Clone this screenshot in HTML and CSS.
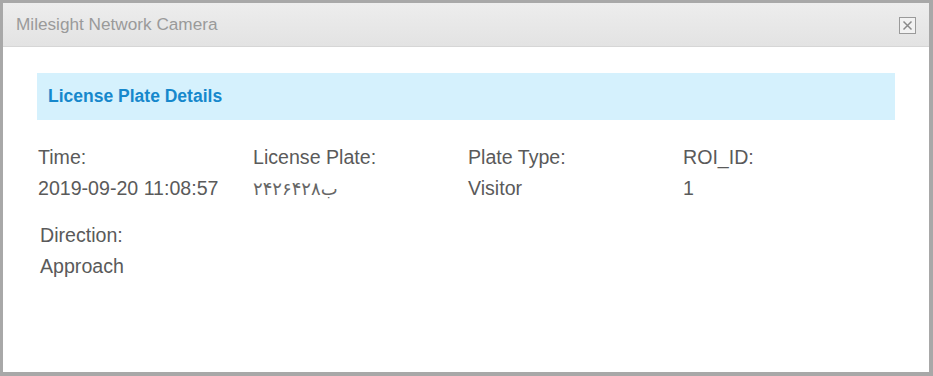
FILE: index.html
```html
<!DOCTYPE html>
<html>
<head>
<meta charset="utf-8">
<link rel="stylesheet" href="styles.css">
</head>
<body>
<div class="dialog">
  <div class="header">
    <span class="title">Milesight Network Camera</span>
    <span class="close" aria-label="close">
      <svg width="15" height="15" viewBox="0 0 15 15"><path d="M3.5 3.5 L11.5 11.5 M11.5 3.5 L3.5 11.5" stroke="#8a8a8a" stroke-width="1.5" fill="none"/></svg>
    </span>
  </div>
  <div class="body">
    <div class="section">License Plate Details</div>
    <div class="grid">
      <div class="field"><div class="label">Time:</div><div class="value">2019-09-20 11:08:57</div></div>
      <div class="field"><div class="label">License Plate:</div><div class="value plate">ب۲۴۲۶۴۲۸</div></div>
      <div class="field"><div class="label">Plate Type:</div><div class="value">Visitor</div></div>
      <div class="field"><div class="label">ROI_ID:</div><div class="value">1</div></div>
    </div>
    <div class="grid second">
      <div class="field"><div class="label">Direction:</div><div class="value">Approach</div></div>
    </div>
  </div>
</div>
</body>
</html>
```
FILE: styles.css
```css
html, body { margin: 0; padding: 0; background: #fff; }
body { font-family: "Liberation Sans", Arial, sans-serif; }
.dialog {
  box-sizing: border-box;
  width: 933px;
  height: 376px;
  border-style: solid;
  border-color: #a8a8a8;
  border-width: 3px 4px 4px 3px;
  background: #fff;
}
.header {
  height: 43px;
  border-bottom: 1px solid #d6d6d6;
  background: linear-gradient(#ededed, #e3e3e3);
  display: flex;
  align-items: center;
  justify-content: space-between;
  padding: 0 13px 0 13px;
}
.title { font-size: 17.2px; color: #9a9a9a; }
.close {
  width: 15px; height: 15px;
  border: 1px solid #9a9a9a;
  display: flex; align-items: center; justify-content: center;
  background: #f2f2f2;
  margin-top: 1px;
}
.close svg { display: block; }
.body { padding: 26px 34px 0 34px; }
.section {
  height: 47px;
  background: #d5f1fd;
  color: #1688cc;
  font-weight: bold;
  font-size: 17.5px;
  display: flex;
  align-items: center;
  padding-left: 11px;
}
.grid {
  display: grid;
  grid-template-columns: repeat(4, 215px);
  padding-left: 1px;
  margin-top: 22px;
  color: #5a5a5a;
  font-size: 19.6px;
}
.grid.second { margin-top: 16px; padding-left: 3px; }
.label, .value { height: 31px; line-height: 31px; }
.plate { font-family: "DejaVu Sans", sans-serif; font-size: 18px; color: #666; }
```
